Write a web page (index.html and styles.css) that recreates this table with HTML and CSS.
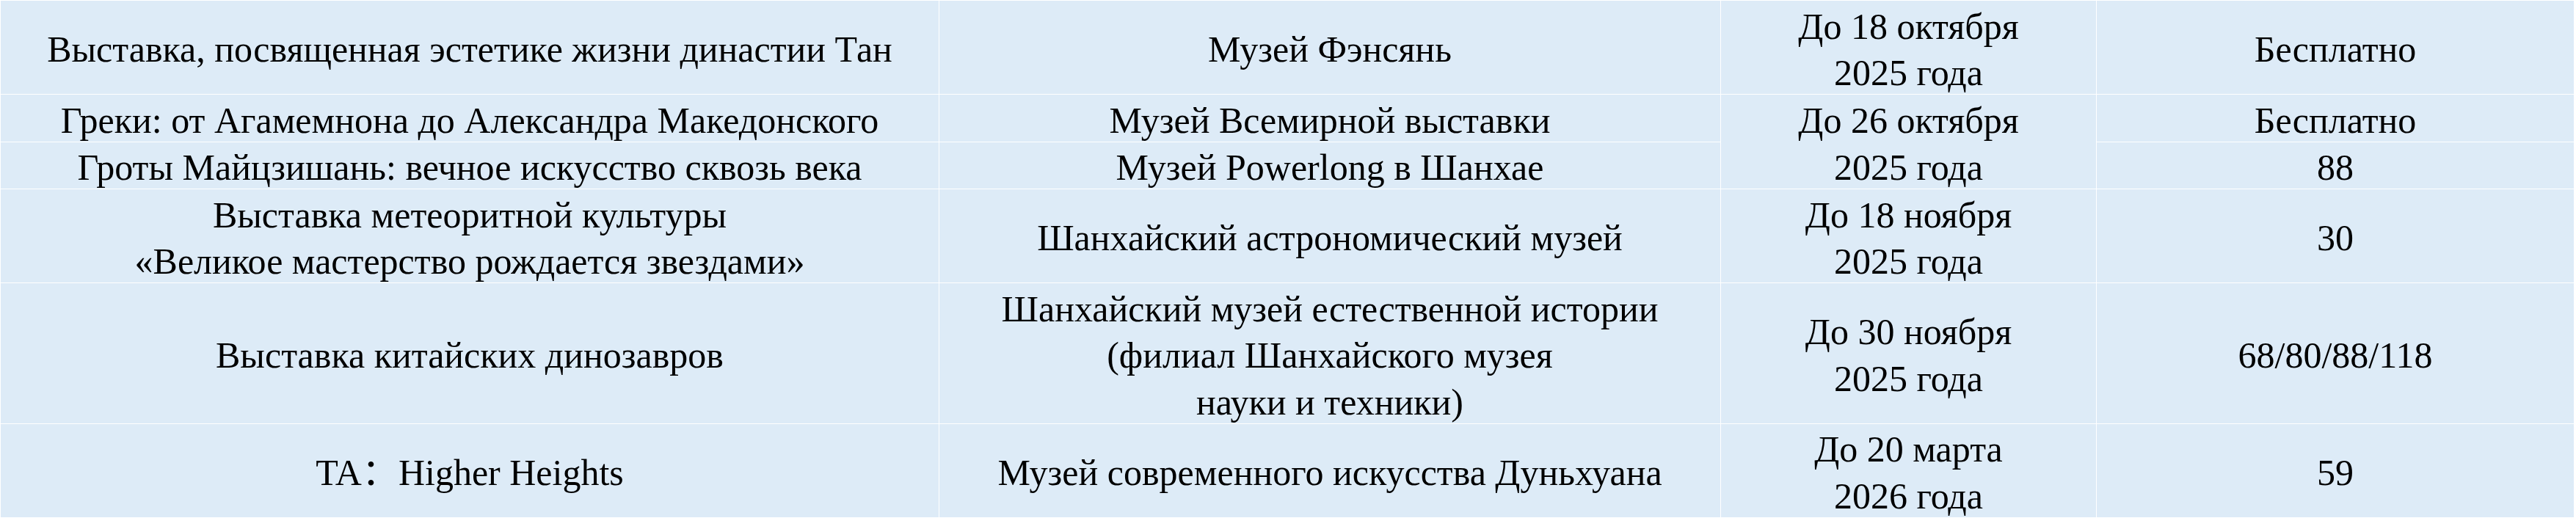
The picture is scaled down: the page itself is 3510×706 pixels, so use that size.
FILE: index.html
```html
<!DOCTYPE html>
<html lang="ru">
<head>
<meta charset="utf-8">
<title>Выставки</title>
<link rel="stylesheet" href="styles.css">
</head>
<body>
<div class="table">
  <div class="cell">Выставка, посвященная эстетике жизни династии Тан</div>
  <div class="cell">Музей Фэнсянь</div>
  <div class="cell">До 18 октября<br>2025 года</div>
  <div class="cell">Бесплатно</div>

  <div class="cell">Греки: от Агамемнона до Александра Македонского</div>
  <div class="cell">Музей Всемирной выставки</div>
  <div class="cell span2">До 26 октября<br>2025 года</div>
  <div class="cell">Бесплатно</div>

  <div class="cell">Гроты Майцзишань: вечное искусство сквозь века</div>
  <div class="cell">Музей Powerlong в Шанхае</div>
  <div class="cell">88</div>

  <div class="cell">Выставка метеоритной культуры<br>«Великое мастерство рождается звездами»</div>
  <div class="cell">Шанхайский астрономический музей</div>
  <div class="cell">До 18 ноября<br>2025 года</div>
  <div class="cell">30</div>

  <div class="cell">Выставка китайских динозавров</div>
  <div class="cell">Шанхайский музей естественной истории<br>(филиал Шанхайского музея<br>науки и техники)</div>
  <div class="cell">До 30 ноября<br>2025 года</div>
  <div class="cell">68/80/88/118</div>

  <div class="cell">TA：Higher Heights</div>
  <div class="cell">Музей современного искусства Дуньхуана</div>
  <div class="cell">До 20 марта<br>2026 года</div>
  <div class="cell">59</div>
</div>
</body>
</html>
```
FILE: styles.css
```css
html, body {
  margin: 0;
  padding: 0;
  background: #ffffff;
}

.table {
  display: grid;
  grid-template-columns: 1278px 1064px 511px 650px;
  grid-template-rows: 127px 63.5px 63.5px 127px 190.5px 127px;
  gap: 1px;
  padding: 1px;
  width: max-content;
  background: #ffffff;
  font-family: "Liberation Serif", "Noto Sans CJK SC", serif;
  font-size: 50px;
  line-height: 63.5px;
  color: #000000;
}

.cell {
  box-sizing: border-box;
  background: #ddebf7;
  display: flex;
  flex-direction: column;
  justify-content: center;
  align-items: center;
  text-align: center;
  white-space: nowrap;
  padding-top: 7px;
}

.span2 {
  grid-row: span 2;
}
```
